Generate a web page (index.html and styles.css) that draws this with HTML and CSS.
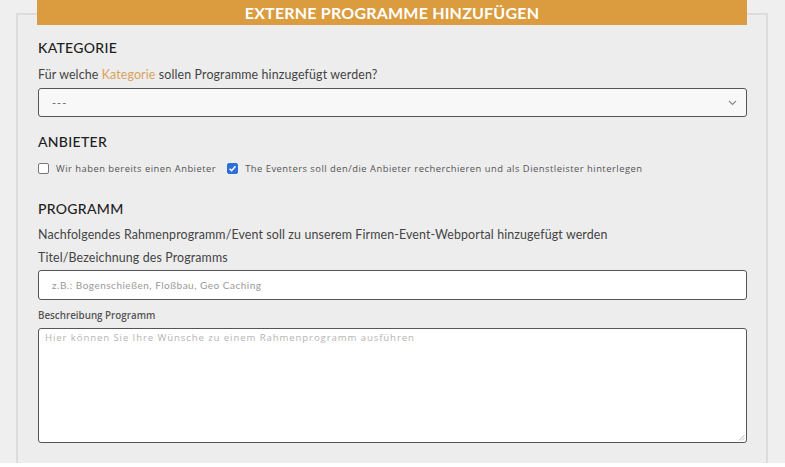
FILE: index.html
```html
<!DOCTYPE html>
<html lang="de">
<head>
<meta charset="utf-8">
<title>Externe Programme hinzufügen</title>
<link rel="stylesheet" href="styles.css">
</head>
<body>
<div class="page">
  <div class="panel">
    <div class="banner">EXTERNE PROGRAMME HINZUFÜGEN</div>

    <h2 class="section-title first">KATEGORIE</h2>
    <p class="question">Für welche <span class="accent">Kategorie</span> sollen Programme hinzugefügt werden?</p>
    <div class="select">
      <span class="select-value">---</span>
      <svg class="chevron" width="9" height="6" viewBox="0 0 9 6"><path d="M1 1 L4.5 4.5 L8 1" fill="none" stroke="#8a8a8a" stroke-width="1.1"/></svg>
    </div>

    <h2 class="section-title anbieter">ANBIETER</h2>
    <div class="check-row">
      <span class="box"></span>
      <span class="check-label">Wir haben bereits einen Anbieter</span>
      <span class="box checked"><svg width="9" height="9" viewBox="0 0 9 9"><path d="M1.6 4.7 L3.6 6.7 L7.5 2.2" fill="none" stroke="#fff" stroke-width="1.6"/></svg></span>
      <span class="check-label">The Eventers soll den/die Anbieter recherchieren und als Dienstleister hinterlegen</span>
    </div>

    <h2 class="section-title programm">PROGRAMM</h2>
    <p class="question intro">Nachfolgendes Rahmenprogramm/Event soll zu unserem Firmen-Event-Webportal hinzugefügt werden</p>
    <p class="question field-label">Titel/Bezeichnung des Programms</p>
    <div class="input"><span class="placeholder">z.B.: Bogenschießen, Floßbau, Geo Caching</span></div>

    <p class="small-label">Beschreibung Programm</p>
    <div class="textarea">
      <span class="ta-placeholder">Hier können Sie Ihre Wünsche zu einem Rahmenprogramm ausführen</span>
      <svg class="grip" width="7" height="7" viewBox="0 0 7 7"><path d="M6.5 1 L1 6.5 M6.5 4 L4 6.5" stroke="#aaa" stroke-width="0.9"/></svg>
    </div>
  </div>
</div>
</body>
</html>
```

FILE: styles.css
```css
* { box-sizing: border-box; }
html, body { margin: 0; padding: 0; background: #ffffff; }
body { font-family: Lato, "Open Sans", sans-serif; }

.page {
  height: 463px;
  overflow: hidden;
  background: #efefef;
  padding-top: 13px;
}

.panel {
  margin-left: 16px;
  width: 752px;
  height: 600px;
  border: 2px solid #dcdcdc;
  background: #ededed;
  padding: 0 19px 0 20px;
}

.banner {
  margin: -15px 0 0 -1px;
  height: 25px;
  line-height: 25px;
  background: #da9c3e;
  color: #fff;
  text-align: center;
  font-weight: 700;
  font-size: 16px;
  letter-spacing: 0.2px;
}

.section-title {
  margin: 0;
  font-size: 14px;
  line-height: 20px;
  font-weight: 500;
  color: #1e1e1e;
  letter-spacing: 0.3px;
}
.section-title.first { margin-top: 13px; }
.section-title.anbieter { margin-top: 15px; }
.section-title.programm { margin-top: 23px; }

.question {
  margin: 8px 0 0;
  font-size: 12.4px;
  line-height: 18px;
  color: #444;
  letter-spacing: 0.13px;
}
.question.intro { margin-top: 7px; }
.question.field-label { margin-top: 5px; }
.accent { color: #d9a25e; }

.select {
  margin-top: 4px;
  height: 29px;
  border: 1.5px solid #555;
  border-radius: 3px;
  background: #f8f8f8;
  display: flex;
  align-items: center;
  justify-content: space-between;
  padding: 0 9px 0 13px;
}
.select-value { font-size: 11px; color: #666; letter-spacing: 1px; }

.check-row {
  margin-top: 8px;
  height: 16px;
  display: flex;
  align-items: center;
  font-family: "Open Sans", sans-serif;
  font-size: 9.4px;
  color: #555;
  letter-spacing: 0.49px;
}
.box {
  width: 11px;
  height: 11px;
  border: 1px solid #777;
  border-radius: 2px;
  background: #fff;
  margin-right: 7px;
  display: flex;
  align-items: center;
  justify-content: center;
}
.box.checked {
  background: #2c6fd8;
  border-color: #2c6fd8;
  margin-left: 11px;
}

.input {
  margin-top: 3px;
  height: 30px;
  border: 1.5px solid #555;
  border-radius: 3px;
  background: #fff;
  display: flex;
  align-items: center;
  padding-left: 13px;
}
.placeholder { font-size: 10px; color: #999; letter-spacing: 0.5px; }

.small-label {
  margin: 8px 0 0;
  font-family: "Open Sans", sans-serif;
  font-size: 9.8px;
  line-height: 16px;
  font-weight: 600;
  color: #555;
}

.textarea {
  margin-top: 4px;
  height: 115px;
  border: 1.5px solid #555;
  border-radius: 3px;
  background: #fff;
  padding: 2px 6px;
  display: flex;
  flex-direction: column;
  justify-content: space-between;
}
.ta-placeholder {
  font-family: "Open Sans", sans-serif;
  font-size: 9.6px;
  color: #b4b4b4;
  letter-spacing: 0.9px;
  line-height: 14px;
}
.grip { align-self: flex-end; margin-right: -5px; margin-bottom: -1px; }
```
